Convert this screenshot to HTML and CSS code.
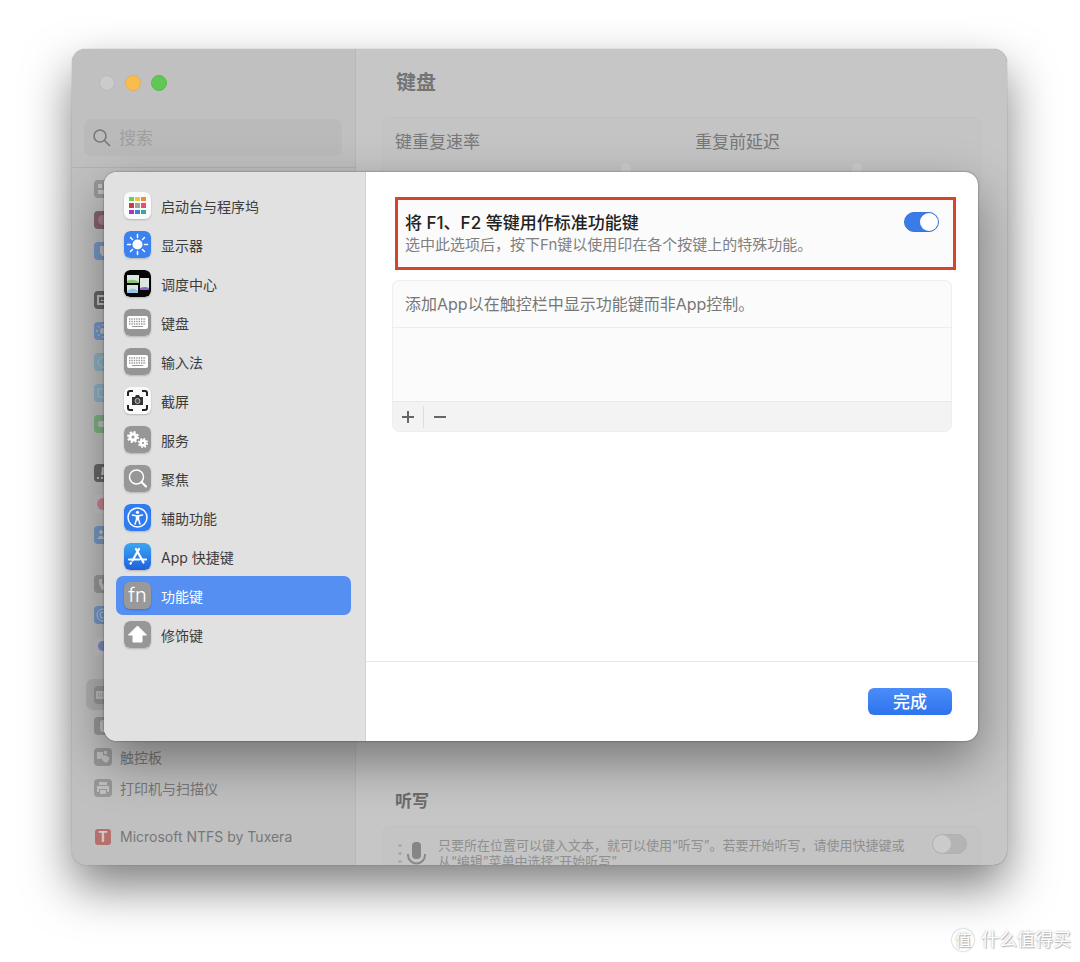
FILE: index.html
```html
<!DOCTYPE html>

<html lang="zh-CN">

<head>
    <meta charset="UTF-8">
    <meta name="viewport" content="width=device-width, initial-scale=1.0">
    <title>键盘</title>
    <link rel="stylesheet" href="styles.css">
</head>

<body>

    <div class="window">
        <aside class="sidebar">
            <div class="lights">
                <span class="light"></span>
                <span class="light yellow"></span>
                <span class="light green"></span>
            </div>
            <label class="search">
                <svg width="18" height="18" viewBox="0 0 18 18" fill="none" stroke="#777" stroke-width="1.600"><circle cx="7" cy="7" r="6"/><path d="M11.500 11.500L17 17"/></svg>
                <input type="search" placeholder="搜索">
            </label>
            <nav class="settings">
                <ul>
                    <li><span class="mini gray"><svg viewBox="0 0 18 18"><path d="M4 4h4v4H4zM4 10h9v4H4z"/></svg></span></li>
                    <li><span class="mini wine"><svg viewBox="0 0 18 18"><circle cx="9" cy="9" r="5" fill="#a77f8c"/></svg></span></li>
                    <li><span class="mini blue"><svg viewBox="0 0 18 18"><path d="M6 4h8v10H8L6 11z"/></svg></span></li>
                </ul>
                <ul>
                    <li><span class="mini dark"><svg viewBox="0 0 18 18"><path d="M3 4h12v10H3zM5 6v6h8v-2H7V9h6V6z" fill-rule="evenodd"/></svg></span></li>
                    <li><span class="mini blue"><svg viewBox="0 0 18 18"><circle cx="9" cy="9" r="3"/><path d="M9 2v14M2 9h14M4 4l10 10M4 14L14 4" stroke="#d0d0d0" stroke-dasharray="2 10"/></svg></span></li>
                    <li><span class="mini cyan"><svg viewBox="0 0 18 18"><circle cx="9" cy="9" r="5" fill="none" stroke="#b4c4cc"/></svg></span></li>
                    <li><span class="mini cyan"><svg viewBox="0 0 18 18"><path d="M4 5h10v8H4z" fill="none" stroke="#b4c4cc"/></svg></span></li>
                    <li><span class="mini lime"><svg viewBox="0 0 18 18"><rect x="4" y="6" width="10" height="6" rx="2"/></svg></span></li>
                </ul>
                <ul>
                    <li><span class="mini dark"><svg viewBox="0 0 18 18"><path d="M8 3h2v8H7zM3 13h2v2H3zM7 13h2v2H7z"/></svg></span></li>
                    <li><span class="mini pale"><svg viewBox="0 0 18 18"><circle cx="9" cy="9" r="6" fill="#c98590"/></svg></span></li>
                    <li><span class="mini blue"><svg viewBox="0 0 18 18"><circle cx="7" cy="6" r="2"/><path d="M3 13q4-7 8 0z"/></svg></span></li>
                </ul>
                <ul>
                    <li><span class="mini gray"><svg viewBox="0 0 18 18"><path d="M5 4h3v4l2 2v5H8l-3-6z"/></svg></span></li>
                    <li><span class="mini blue"><svg viewBox="0 0 18 18" fill="none" stroke="#b9cbe4"><circle cx="9" cy="9" r="6"/><circle cx="9" cy="9" r="3"/></svg></span></li>
                    <li><span class="mini pale"><svg viewBox="0 0 18 18"><circle cx="9" cy="9" r="5" fill="#7c8ac8"/></svg></span></li>
                </ul>
                <ul>
                    <li class="current"><span class="mini gray"><svg viewBox="0 0 18 18"><rect x="2" y="5" width="14" height="8" rx="1"/><path d="M4 8h10M4 10h10" stroke="#8e8e8e" stroke-dasharray="1 1"/></svg></span></li>
                    <li><span class="mini gray"><svg viewBox="0 0 18 18"><rect x="6" y="3" width="7" height="12" rx="3"/></svg></span></li>
                    <li><span class="mini gray"><svg viewBox="0 0 18 18"><path d="M3 4h6v4L7 11H3zM8 8l3-1 4 2v3l-3 3-4-3z"/><path d="M10 3h3v3h-3z"/></svg></span>触控板</li>
                    <li><span class="mini gray"><svg viewBox="0 0 18 18"><path d="M5 3h8v3H5zM3 7h12v6h-2v-3H5v3H3zM6 11h6v4H6z"/></svg></span>打印机与扫描仪</li>
                </ul>
                <ul>
                    <li><span class="mini small red">T</span>Microsoft NTFS by Tuxera</li>
                </ul>
            </nav>
        </aside>

        <main class="content">
            <h1>键盘</h1>
            <div class="panel repeat">
                <label>键重复速率<input class="slider" type="range" value="95" disabled></label>
                <label>重复前延迟<input class="slider" type="range" value="66" disabled></label>
            </div>
            <section class="dictation">
                <h2>听写</h2>
                <div class="panel dictation-row">
                    <svg width="28" height="28" viewBox="0 0 28 28" fill="none" stroke="#888" stroke-width="2"><path d="M2 4v20" stroke="#aaa" stroke-width="3" stroke-dasharray="3 5"/><rect x="14" y="2" width="9" height="17" rx="4" fill="#858585" stroke="none"/><path d="M10 14v1a8 8 0 0 0 17 0v-1"/></svg>
                    <label for="dictation">只要所在位置可以键入文本，就可以使用“听写”。若要开始听写，请使用快捷键或从“编辑”菜单中选择“开始听写”</label>
                    <input class="switch off" type="checkbox" id="dictation" disabled>
                </div>
            </section>
        </main>

        <div class="dialog" role="dialog">
            <nav class="shortcuts">
                <a href="#launchpad"><svg class="icon" viewBox="0 0 27 27">
                    <rect width="27" height="27" rx="6" fill="#fafafa"/>
                    <path fill="#6bd04a" d="M5 5h5v4H5z"/><path fill="#f1c33c" d="M11 5h5v4h-5z"/><path fill="#ee8b38" d="M17 5h5v4h-5z"/>
                    <path fill="#cf3b3b" d="M5 11h5v5H5z"/><path fill="#9aa59e" d="M11 11h5v5h-5z"/><path fill="#e8506b" d="M17 11h5v5h-5z"/>
                    <path fill="#a336c4" d="M5 18h5v4H5z"/><path fill="#3b80d9" d="M11 18h5v4h-5z"/><path fill="#35a89c" d="M17 18h5v4h-5z"/>
                </svg>启动台与程序坞</a>
                <a href="#display"><svg class="icon" viewBox="0 0 27 27">
                    <rect width="27" height="27" rx="6" fill="#3b82f0"/>
                    <circle cx="13.500" cy="13.500" r="5" fill="#fff"/>
                    <path d="M13.500 3.500v3M13.500 20.500v3M3.500 13.500h3M20.500 13.500h3M6.500 6.500l2 2M18.500 18.500l2 2M6.500 20.500l2-2M18.500 8.500l2-2" stroke="#fff" stroke-width="1.500" stroke-linecap="round"/>
                </svg>显示器</a>
                <a href="#mission"><svg class="icon" viewBox="0 0 27 27">
                    <rect width="27" height="27" rx="6" fill="#050505"/>
                    <path fill="#dce5e0" d="M3 5h12v8H3zM3 15h11v8H3zM16 8h9v12h-9z"/>
                    <path fill="#8bc873" d="M3 11q6-3 12 1v1H3z"/><path fill="#8fc7e6" d="M3 21q6-5 11 0v2H3z"/><path fill="#8a66c9" d="M16 18q5-2 9 0v2h-9z"/>
                </svg>调度中心</a>
                <a href="#keyboard"><svg class="icon" viewBox="0 0 27 27">
                    <rect width="27" height="27" rx="6" fill="#959595"/>
                    <rect x="3" y="7" width="21" height="13" rx="2" fill="#fff"/>
                    <path d="M5 10h17M5 12.500h17M5 15h17" stroke="#999" stroke-width="1.300" stroke-dasharray="1.400 1"/><path d="M8 17.500h11" stroke="#999"/>
                </svg>键盘</a>
                <a href="#input"><svg class="icon" viewBox="0 0 27 27">
                    <rect width="27" height="27" rx="6" fill="#959595"/>
                    <rect x="3" y="7" width="21" height="13" rx="2" fill="#fff"/>
                    <path d="M5 10h17M5 12.500h17M5 15h17" stroke="#999" stroke-width="1.300" stroke-dasharray="1.400 1"/><path d="M8 17.500h11" stroke="#999"/>
                </svg>输入法</a>
                <a href="#screenshot"><svg class="icon" viewBox="0 0 27 27">
                    <rect width="27" height="27" rx="6" fill="#fafafa"/>
                    <path d="M4 9V6a2 2 0 0 1 2-2h3M18 4h3a2 2 0 0 1 2 2v3M23 18v3a2 2 0 0 1-2 2h-3M9 23H6a2 2 0 0 1-2-2v-3" fill="none" stroke="#222" stroke-width="2"/>
                    <path d="M8 10h3l1-2h3l1 2h3v8H8z" fill="#333"/><circle cx="13.500" cy="14" r="2.500" fill="#555" stroke="#bbb"/>
                </svg>截屏</a>
                <a href="#services"><svg class="icon" viewBox="0 0 27 27">
                    <rect width="27" height="27" rx="6" fill="#979797"/>
                    <g fill="none" stroke="#fff">
                        <circle cx="9" cy="11" r="3" stroke-width="3"/><circle cx="9" cy="11" r="5" stroke-width="2" stroke-dasharray="2 1.930"/>
                        <circle cx="19" cy="17" r="2.400" stroke-width="2.600"/><circle cx="19" cy="17" r="4.200" stroke-width="1.800" stroke-dasharray="1.700 1.600"/>
                    </g>
                </svg>服务</a>
                <a href="#spotlight"><svg class="icon" viewBox="0 0 27 27">
                    <rect width="27" height="27" rx="6" fill="#979797"/>
                    <circle cx="12.500" cy="12" r="7" fill="none" stroke="#fff" stroke-width="1.500"/><path d="M17.500 17l4.500 4.500" stroke="#fff" stroke-width="2.200" stroke-linecap="round"/>
                </svg>聚焦</a>
                <a href="#accessibility"><svg class="icon" viewBox="0 0 27 27">
                    <rect width="27" height="27" rx="6" fill="#2f7cf0"/>
                    <circle cx="13.500" cy="13.500" r="9.500" fill="none" stroke="#fff" stroke-width="1.500"/>
                    <circle cx="13.500" cy="8.300" r="1.600" fill="#fff"/>
                    <path d="M8.500 11l3.500.8h3l3.500-.8M12.500 12v3.500L11 20M14.500 12v3.500L16 20M13.500 12v4" fill="none" stroke="#fff" stroke-width="1.500" stroke-linecap="round"/>
                </svg>辅助功能</a>
                <a href="#apps"><svg class="icon" viewBox="0 0 27 27">
                    <defs><linearGradient id="store" x2="0" y2="1"><stop stop-color="#38a8f3"/><stop offset="1" stop-color="#2060dd"/></linearGradient></defs>
                    <rect width="27" height="27" rx="6" fill="url(#store)"/>
                    <path d="M15 6L8.500 17.500M12 6l7.500 13.500M5 16.500h10.500M18.500 16.500H22M7 19.800l-.5.700" stroke="#fff" stroke-width="2.200" stroke-linecap="round"/>
                </svg>App 快捷键</a>
                <a class="selected" href="#fn"><span class="icon fn">fn</span>功能键</a>
                <a href="#modifier"><svg class="icon" viewBox="0 0 27 27">
                    <rect width="27" height="27" rx="6" fill="#979797"/>
                    <path d="M13.500 5l9 9h-4.500v7H9v-7H4.500z" fill="#fff" stroke="#fff" stroke-linejoin="round"/>
                </svg>修饰键</a>
            </nav>

            <div class="pane">
                <div class="options">
                    <div class="highlight">
                        <label for="fnkeys">
                            <strong>将 F1、F2 等键用作标准功能键</strong>
                            <small>选中此选项后，按下Fn键以使用印在各个按键上的特殊功能。</small>
                        </label>
                        <input class="switch" type="checkbox" id="fnkeys" checked>
                    </div>
                    <div class="apps">
                        <p>添加App以在触控栏中显示功能键而非App控制。</p>
                        <div class="apps-list"></div>
                        <div class="apps-tools">
                            <button aria-label="添加"><svg width="12" height="12" stroke="#666" stroke-width="2"><path d="M0 6h12M6 0v12"/></svg></button>
                            <button aria-label="移除"><svg width="12" height="12" stroke="#666" stroke-width="2"><path d="M0 6h12"/></svg></button>
                        </div>
                    </div>
                </div>
                <footer class="actions">
                    <button class="done">完成</button>
                </footer>
            </div>
        </div>
    </div>

    <div class="watermark"><span>值</span>什么值得买</div>

</body>

</html>
```
FILE: styles.css
```css
* {
    box-sizing: border-box;
}

body {
    margin: 0;
    padding: 49px 73px 97px 72px;
    height: 100vh;
    min-height: 900px;
    position: relative;
    background-color: #fff;
    color: #3c3c3c;
    font-family: Inter, "Noto Sans CJK SC", sans-serif;
    font-size: 14px;
}

h1, h2, p, ul {
    margin: 0;
    padding: 0;
}

button, input {
    font-family: inherit;
    margin: 0;
}

.window {
    position: relative;
    display: grid;
    grid-template-columns: 284px 1fr;
    height: 100%;
    border-radius: 14px;
    background-color: #c6c6c6;
    color: #777;
    box-shadow: 0 0 1px rgba(0, 0, 0, 0.5), 0 22px 48px rgba(0, 0, 0, 0.5);
}

/* sidebar */
.sidebar {
    background-color: #c0c0c0;
    border-right: 1px solid #b8b8b8;
    border-radius: 14px 0 0 14px;
    overflow: hidden;
}

.lights {
    display: flex;
    gap: 10px;
    padding: 26px 27px 28px;
}

.light {
    width: 16px;
    height: 16px;
    border-radius: 50%;
    background-color: #cbcbcb;
    border: 1px solid #b8b8b8;
}

.yellow {
    background-color: #f9bd4e;
    border-color: #e5b050;
}

.green {
    background-color: #5fc853;
    border-color: #58b84e;
}

.search {
    display: flex;
    align-items: center;
    gap: 8px;
    height: 37px;
    margin: 0 13px 11px 12px;
    padding: 0 9px;
    border-radius: 7px;
    background-color: #bababa;
}

.search input {
    flex: 1;
    min-width: 0;
    padding: 0;
    border: none;
    outline: none;
    background: none;
    font-size: 17px;
}

.search input::placeholder {
    color: #9f9f9f;
}

.settings {
    display: flex;
    flex-direction: column;
    gap: 18px;
    padding: 5px 14px;
    border-top: 1px solid #b2b2b2;
}

.settings ul {
    list-style: none;
}

.settings li {
    display: flex;
    align-items: center;
    gap: 8px;
    height: 31px;
    padding-left: 8px;
    border-radius: 7px;
    white-space: nowrap;
}

.settings .current {
    background-color: #b0b0b0;
}

.mini {
    display: flex;
    width: 18px;
    height: 18px;
    border-radius: 4px;
    justify-content: center;
    align-items: center;
    overflow: hidden;
    color: #d4c8c8;
    fill: #c0c0c0;
}

.small {
    width: 16px;
    height: 16px;
    margin: 0 1px;
    border-radius: 3px;
    font-weight: bold;
}

.gray { background-color: #989898; }
.dark { background-color: #686868; }
.wine { background-color: #85636e; }
.blue { background-color: #7898c8; }
.cyan { background-color: #8fb2c4; }
.lime { background-color: #80b484; }
.pale { background-color: #c4c4c8; }
.red { background-color: #b5706c; }

/* window content */
.content {
    display: flex;
    flex-direction: column;
    padding: 18px 26px 0;
    overflow: hidden;
    border-radius: 0 0 14px 0;
}

h1 {
    padding-left: 14px;
    font-size: 20px;
    line-height: 32px;
    color: #747474;
}

h2 {
    padding: 0 13px 12px;
    font-size: 17px;
    line-height: 26px;
    color: #6c6c6c;
}

.panel {
    border: 1px solid #c1c1c1;
    border-radius: 8px;
    background-color: #c4c4c4;
}

.repeat {
    display: grid;
    grid-template-columns: 300px 1fr;
    margin: 18px 0 auto;
    padding: 11px 12px;
    font-size: 17px;
    line-height: 26px;
}

.slider {
    display: block;
    appearance: none;
    width: 248px;
    height: 20px;
    margin-top: 8px;
    background: none;
}

.slider::-webkit-slider-thumb {
    appearance: none;
    width: 10px;
    height: 20px;
    border-radius: 5px;
    background-color: #cccccc;
}

.dictation {
    margin-bottom: -17px;
}

.dictation-row {
    display: flex;
    gap: 12px;
    padding: 10px 13px 12px 15px;
    font-size: 13px;
    line-height: 16px;
    color: #8f8f8f;
}

.dictation-row svg {
    flex: none;
    margin-top: 3px;
}

.dictation-row label {
    flex: 1;
    padding-right: 10px;
}

/* shared switch */
.switch {
    appearance: none;
    flex: none;
    display: flex;
    justify-content: flex-end;
    width: 35px;
    height: 20px;
    border-radius: 10px;
    background-color: #3a7bea;
    border: 1px solid #3a74d4;
}

.switch::before {
    content: "";
    width: 18px;
    height: 18px;
    border-radius: 50%;
    background-color: #fff;
}

.off {
    justify-content: flex-start;
    margin-top: -3px;
    background-color: #b4b4b4;
    border-color: #b0b0b0;
}

.off::before {
    background-color: #cbcbcb;
}

/* dialog on top of the window */
.dialog {
    position: absolute;
    inset: 123px 29px 124px 32px;
    display: grid;
    grid-template-columns: 262px 1fr;
    border-radius: 13px;
    overflow: hidden;
    background-color: #fff;
    box-shadow: 0 0 2px rgba(0, 0, 0, 0.5), 0 20px 50px rgba(0, 0, 0, 0.4);
}

.shortcuts {
    padding: 14px 14px 0 12px;
    background-color: #e1e1e1;
    border-right: 1px solid #d2d2d2;
}

.shortcuts a {
    display: flex;
    align-items: center;
    gap: 10px;
    height: 39px;
    padding-left: 8px;
    border-radius: 7px;
    color: #3c3c3c;
    text-decoration: none;
}

.shortcuts .selected {
    background-color: #548ff1;
    color: #fff;
}

.icon {
    width: 27px;
    height: 27px;
    border-radius: 6px;
    box-shadow: 0 1px 2px rgba(0, 0, 0, 0.2);
}

.fn {
    background-color: #999;
    color: #fff;
    font-size: 20px;
    font-weight: 300;
    line-height: 27px;
    text-align: center;
}

.pane {
    display: flex;
    flex-direction: column;
}

.options {
    flex: 1;
    padding: 25px 26px 0;
}

.highlight {
    display: flex;
    justify-content: space-between;
    height: 73px;
    margin: 0 -4px 10px 3px;
    padding: 12px 14px 0 7px;
    border: 3px solid #d8432e;
    background-color: #fbfbfb;
}

.highlight strong {
    display: block;
    font-size: 17px;
    font-weight: 500;
    line-height: 22px;
    color: #222;
}

.highlight small {
    display: block;
    font-size: 15px;
    line-height: 22px;
    color: #808080;
}

.apps {
    border: 1px solid #eee;
    border-radius: 7px;
    background-color: #fbfbfb;
    overflow: hidden;
}

.apps p {
    padding-left: 12px;
    font-size: 16px;
    line-height: 46px;
    color: #777;
}

.apps-list {
    height: 75px;
    border-top: 1px solid #ececec;
    border-bottom: 1px solid #e8e8e8;
}

.apps-tools {
    display: flex;
    align-items: center;
    height: 29px;
    background-color: #f3f3f3;
}

.apps-tools button {
    display: flex;
    justify-content: center;
    align-items: center;
    width: 31px;
    height: 22px;
    padding: 0;
    border: none;
    background: none;
}

.apps-tools button:first-child {
    border-right: 1px solid #dedede;
}

.actions {
    display: flex;
    justify-content: flex-end;
    padding: 26px 26px;
    border-top: 1px solid #e6e6e6;
}

.done {
    width: 84px;
    height: 27px;
    padding: 0;
    border: none;
    border-radius: 6px;
    background: linear-gradient(#4a8df8, #2f73ee);
    color: #fff;
    font-size: 17px;
    font-weight: 500;
    line-height: 24px;
}

.watermark {
    position: absolute;
    right: 9px;
    bottom: 9px;
    display: flex;
    align-items: center;
    gap: 7px;
    font-size: 18px;
    line-height: 26px;
    color: #fff;
    text-shadow: 0 0 2px #aaa, 1px 1px 1px #bbb;
}

.watermark span {
    width: 22px;
    height: 22px;
    border-radius: 50%;
    border: 1px solid #fff;
    box-shadow: 0 0 2px #999;
    font-size: 16px;
    line-height: 20px;
    text-align: center;
}
```
